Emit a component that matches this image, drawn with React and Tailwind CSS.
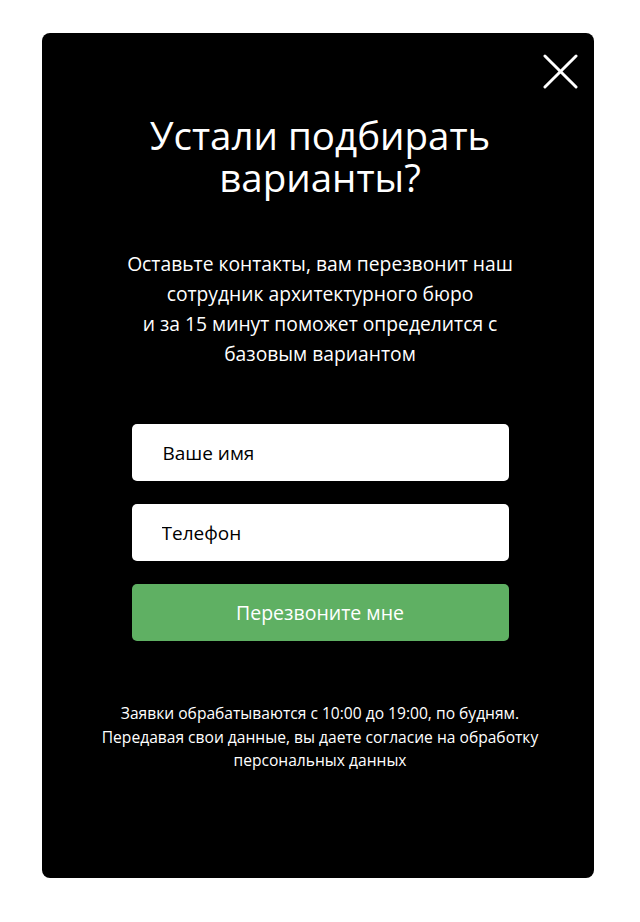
import React from "react";

const font = { fontFamily: '"Open Sans", "Noto Sans", sans-serif' };

const CallbackModal = () => {
  return (
    <div className="min-h-[922px] w-[640px] bg-white pt-[33px] pl-[42px]">
      <div
        className="relative flex h-[845px] w-[552px] flex-col items-center rounded-[8px] bg-black pt-[81px] pl-[4px] text-white"
        style={font}
      >
        <button className="absolute right-[16px] top-[21px] h-[35px] w-[35px]">
          <svg viewBox="0 0 36 36" className="h-full w-full">
            <path
              d="M2 2 L34 34 M34 2 L2 34"
              stroke="white"
              strokeWidth="3"
              strokeLinecap="round"
            />
          </svg>
        </button>

        <h2 className="text-center text-[38.5px] leading-[42px] font-normal">
          Устали подбирать
          <br />
          варианты?
        </h2>

        <p className="mt-[51px] text-center text-[19.3px] leading-[30px]">
          Оставьте контакты, вам перезвонит наш
          <br />
          сотрудник архитектурного бюро
          <br />
          и за 15 минут поможет определится с
          <br />
          базовым вариантом
        </p>

        <div className="mt-[55px] flex w-[377px] flex-col gap-[23px]">
          <input
            className="h-[57px] w-full rounded-[5px] bg-white px-[31px] text-[19px] text-black placeholder:text-black outline-none"
            placeholder="Ваше имя"
            style={font}
          />
          <input
            className="h-[57px] w-full rounded-[5px] bg-white px-[30px] text-[19px] text-black placeholder:text-black outline-none"
            placeholder="Телефон"
            style={font}
          />
          <button className="h-[57px] w-full rounded-[5px] bg-[#5fb063] text-[19.5px] text-white">
            Перезвоните мне
          </button>
        </div>

        <p className="mt-[61px] text-center text-[15.6px] leading-[23.5px]">
          Заявки обрабатываются с 10:00 до 19:00, по будням.
          <br />
          Передавая свои данные, вы даете согласие на обработку
          <br />
          персональных данных
        </p>
      </div>
    </div>
  );
};

export default function App() {
  return <CallbackModal />;
}
